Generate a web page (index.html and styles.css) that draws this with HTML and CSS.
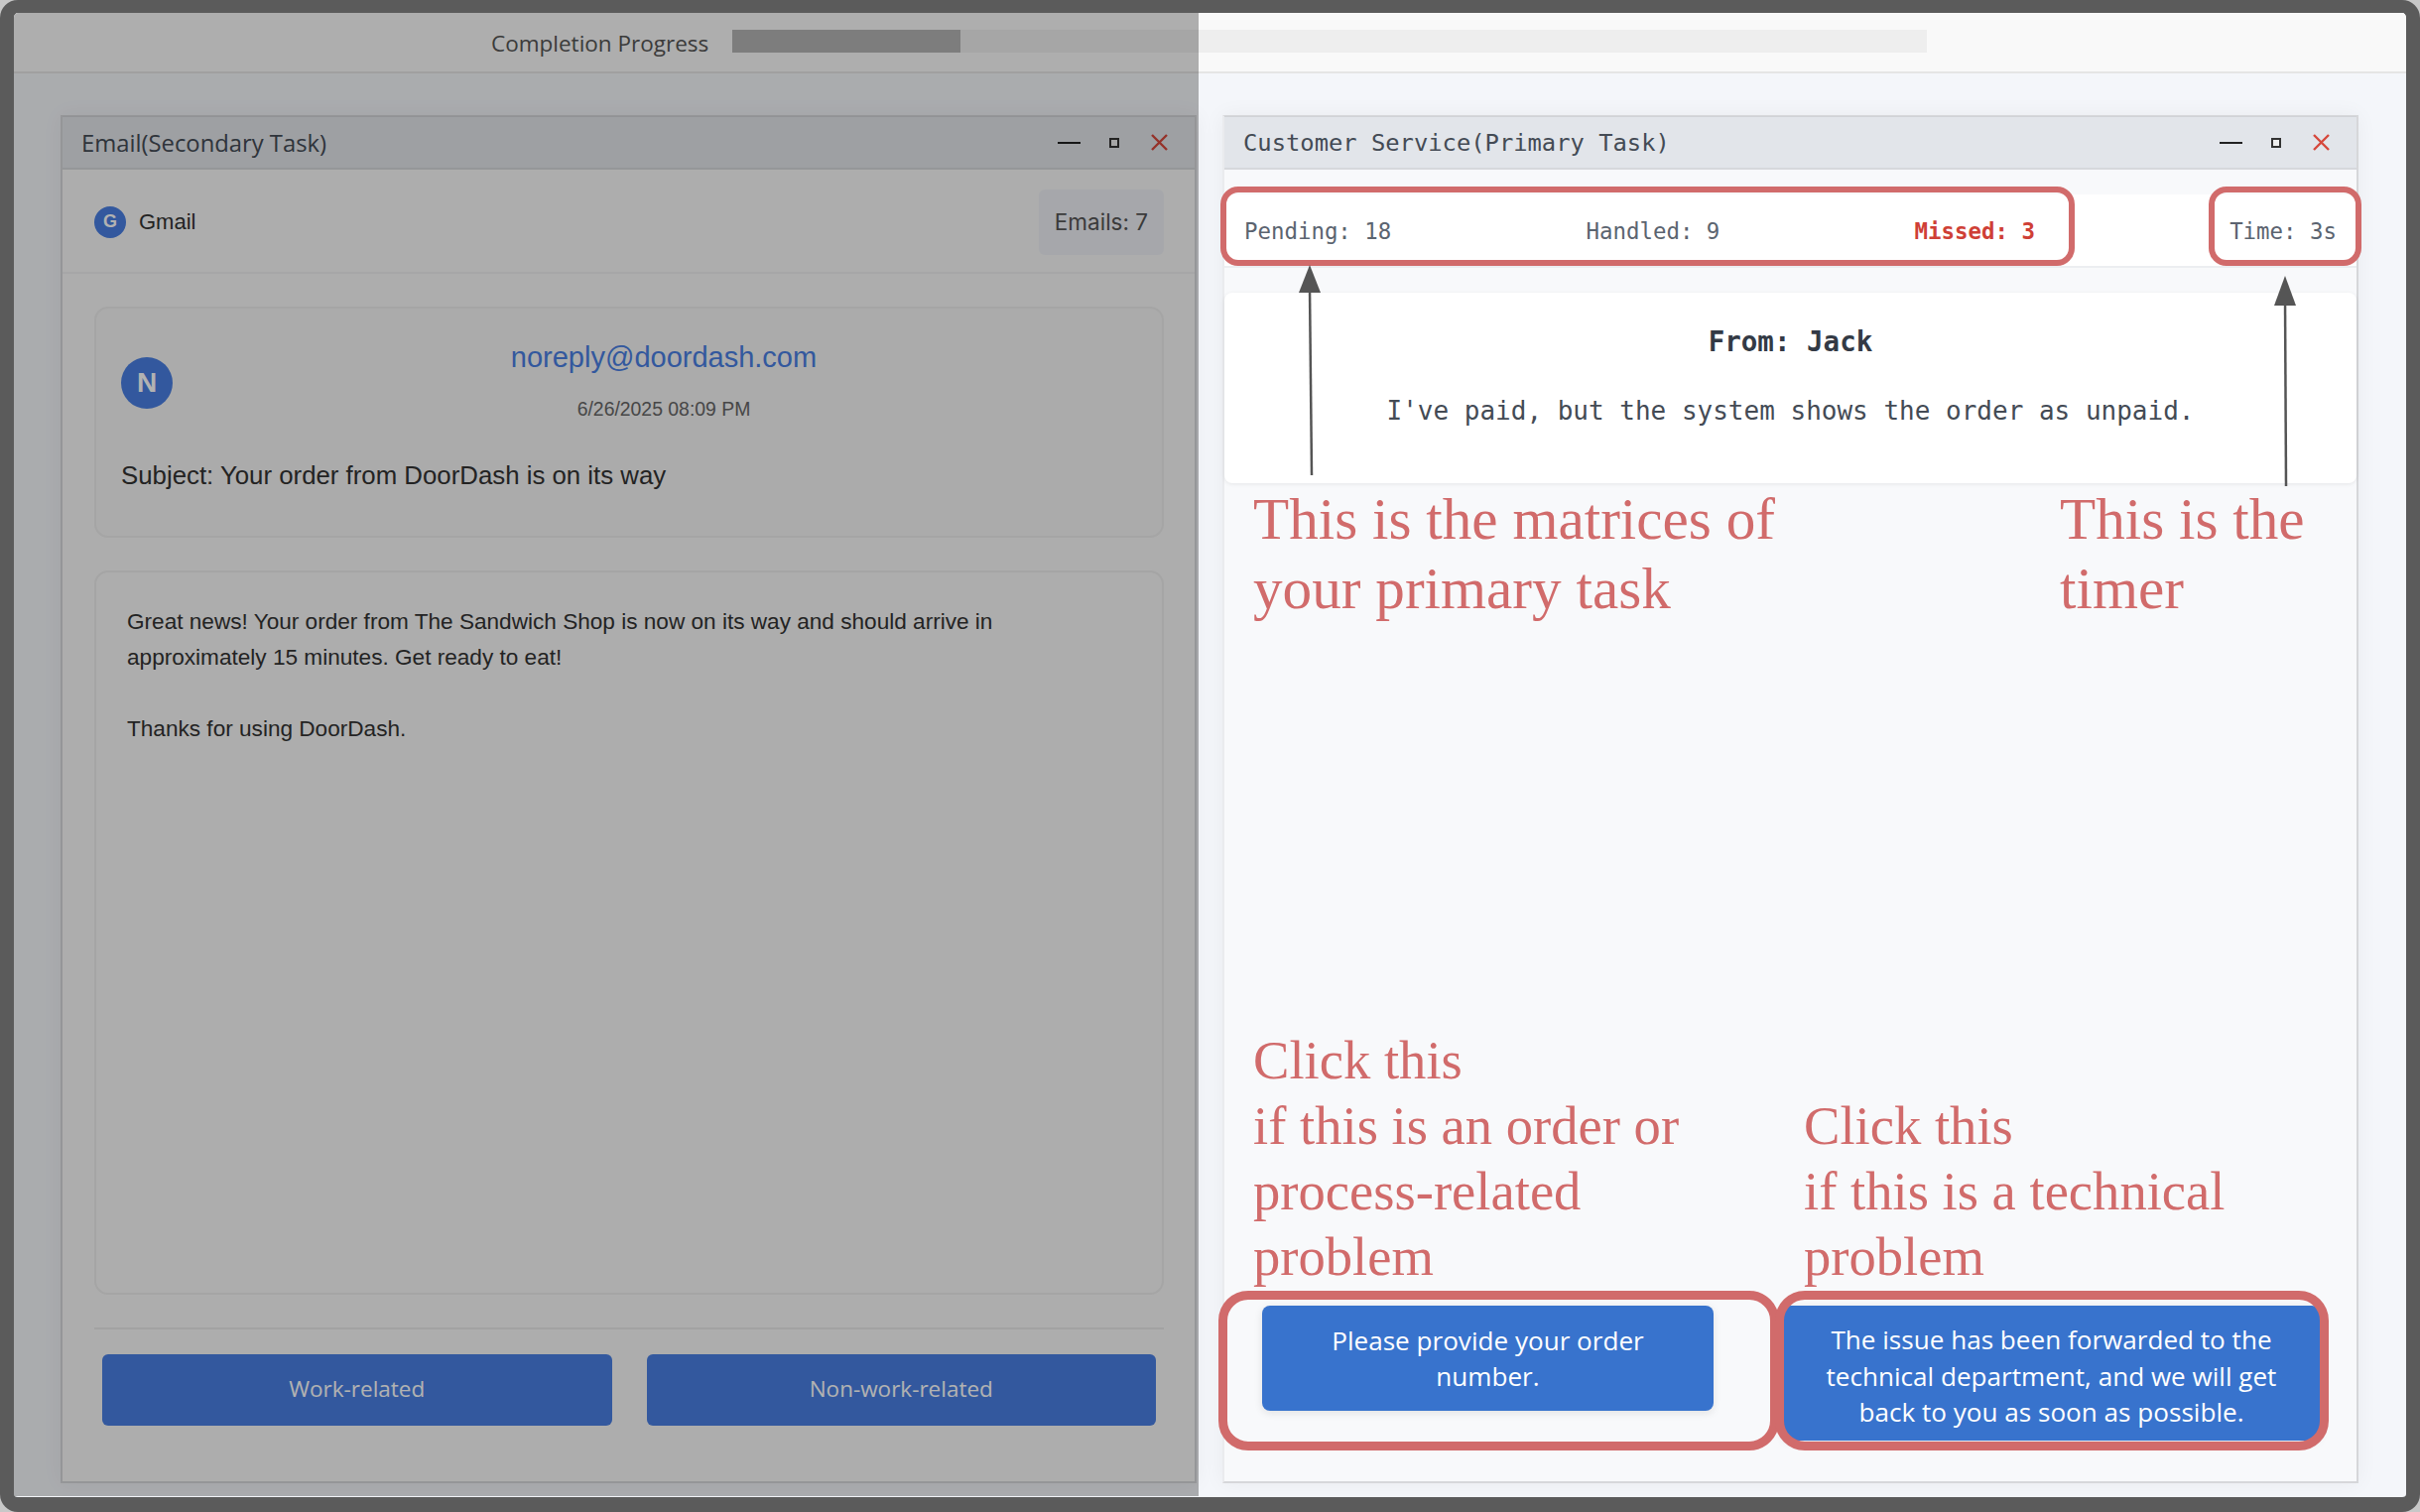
FILE: index.html
```html
<!DOCTYPE html>
<html lang="en">
<head>
    <meta charset="UTF-8">
    <meta name="viewport" content="width=device-width, initial-scale=1.0">
    <title>Task Instructions</title>
    <link rel="stylesheet" href="styles.css">
</head>
<body>

    <div class="frame">
        <!-- Progress -->
        <div class="topbar">
            <span class="progress-label">Completion Progress</span>
            <div class="progress-track"><div class="progress-fill" style="width: 19.1%"></div></div>
        </div>

        <div class="workspace">
            <!-- Email window -->
            <section class="window email-window">
                <div class="titlebar">
                    <span class="title title-email">Email(Secondary Task)</span>
                    <div class="controls">
                        <span class="ctl-min"></span>
                        <span class="ctl-max"></span>
                        <svg class="ctl-close" viewBox="0 0 17 17"><path d="M1 1 16 16M16 1 1 16"/></svg>
                    </div>
                </div>
                <div class="mail-head">
                    <div class="brand"><span class="brand-dot">G</span><span>Gmail</span></div>
                    <div class="mail-count">Emails: 7</div>
                </div>
                <div class="mail-body">
                    <div class="card mail-meta">
                        <div class="sender-row">
                            <span class="avatar">N</span>
                            <div class="sender">
                                <div class="sender-mail">noreply@doordash.com</div>
                                <div class="sender-date">6/26/2025 08:09 PM</div>
                            </div>
                        </div>
                        <div class="subject">Subject: Your order from DoorDash is on its way</div>
                    </div>
                    <div class="card mail-text">
                        Great news! Your order from The Sandwich Shop is now on its way and should arrive in<br>
                        approximately 15 minutes. Get ready to eat!<br><br>
                        Thanks for using DoorDash.
                    </div>
                    <div class="mail-actions">
                        <button class="mail-btn">Work-related</button>
                        <button class="mail-btn">Non-work-related</button>
                    </div>
                </div>
            </section>

            <!-- Customer service window -->
            <section class="window service-window">
                <div class="titlebar">
                    <span class="title title-service">Customer Service(Primary Task)</span>
                    <div class="controls">
                        <span class="ctl-min"></span>
                        <span class="ctl-max"></span>
                        <svg class="ctl-close" viewBox="0 0 17 17"><path d="M1 1 16 16M16 1 1 16"/></svg>
                    </div>
                </div>
                <div class="metrics">
                    <span>Pending: 18</span>
                    <span>Handled: 9</span>
                    <span class="missed">Missed: 3</span>
                    <span>Time: 3s</span>
                </div>
                <div class="message">
                    <div class="message-from">From: Jack</div>
                    <div class="message-text">I've paid, but the system shows the order as unpaid.</div>
                </div>
                <div class="replies">
                    <button class="reply reply-order">Please provide your order number.</button>
                    <button class="reply reply-tech">The issue has been forwarded to the technical department, and we will get back to you as soon as possible.</button>
                </div>
            </section>
        </div>

        <!-- Dim layer over the secondary task -->
        <div class="dim"></div>

        <!-- Annotations -->
        <div class="mark mark-metrics"></div>
        <div class="mark mark-timer"></div>
        <div class="mark mark-big mark-order"></div>
        <div class="mark mark-big mark-tech"></div>

        <svg class="arrows" viewBox="0 0 2439 1524">
            <path class="arrow-line" d="M1322 479 1320 290"/>
            <path class="arrow-head" d="M1320 267 1331 295H1309Z"/>
            <path class="arrow-line" d="M2304 490 2303 300"/>
            <path class="arrow-head" d="M2303 278 2314 308H2292Z"/>
        </svg>

        <div class="note note-metrics">This is the matrices of<br>your primary task</div>
        <div class="note note-timer">This is the<br>timer</div>
        <div class="note note-small note-order">Click this<br>if this is an order or<br>process-related<br>problem</div>
        <div class="note note-small note-tech">Click this<br>if this is a technical<br>problem</div>
    </div>

</body>
</html>
```

FILE: styles.css
```css
* {
    box-sizing: border-box;
}
html, body {
    margin: 0;
    padding: 0;
    height: 100%;
    overflow: hidden;
}
body {
    background-color: #c8c8c8;
}
.frame {
    position: relative;
    height: 1524px;
    display: flex;
    flex-direction: column;
    border: solid #5b5b5b;
    border-width: 13px 14px 15px 14px;
    border-radius: 18px;
    background-color: #f4f6fa;
    overflow: hidden;
}

/* Progress bar */
.topbar {
    height: 61px;
    flex: none;
    display: flex;
    align-items: center;
    background-color: #f9f9f9;
    border-bottom: 2px solid #e5e5e5;
    padding: 0 0 0 481px;
}
.progress-label {
    width: 243px;
    padding-top: 2px;
    font-family: "Open Sans", sans-serif;
    font-size: 22.5px;
    color: #555;
}
.progress-track {
    width: 1204px;
    height: 23px;
    margin-top: -2px;
    background-color: #eeeeee;
}
.progress-fill {
    height: 100%;
    background-color: #b4b4b4;
}

.workspace {
    flex: 1;
    display: flex;
    gap: 26px;
    padding: 42px 48px 14px 47px;
    min-height: 0;
}

/* Windows */
.window {
    flex: 1;
    display: flex;
    flex-direction: column;
    background-color: #f8f9fb;
    border: 2px solid #d6d7da;
    border-top-width: 1px;
    box-shadow: 0 0 20px rgba(0, 0, 0, 0.05);
}
.email-window {
    background-color: #f8f8f8;
}
.service-window {
    border-left-color: #eaebee;
}
.titlebar {
    height: 54px;
    flex: none;
    display: flex;
    align-items: center;
    justify-content: space-between;
    padding: 0 27px 0 19px;
    background-color: #e2e5ea;
    border-top: 1px solid #d0d2d6;
    border-bottom: 2px solid #d6d8dc;
}
.title {
    color: #444b55;
}
.title-email {
    font-family: "Open Sans", sans-serif;
    font-size: 23.8px;
}
.title-service {
    font-family: "DejaVu Sans Mono", monospace;
    font-size: 23.8px;
}
.controls {
    display: flex;
    align-items: center;
}
.ctl-min {
    width: 23px;
    height: 2px;
    background-color: #222;
}
.ctl-max {
    width: 10px;
    height: 10px;
    margin: 0 32px 0 29px;
    border: 2px solid #333;
    background-color: #eee;
}
.ctl-close {
    width: 17px;
    height: 17px;
    fill: none;
    stroke: #d6483c;
    stroke-width: 2.4;
}

/* Email window */
.mail-head {
    height: 105px;
    flex: none;
    display: flex;
    align-items: center;
    justify-content: space-between;
    padding: 2px 31px 0 32px;
    border-bottom: 2px solid #eeeef0;
}
.brand {
    display: flex;
    align-items: center;
    gap: 13px;
    font-family: "Liberation Sans", Arial, sans-serif;
    font-size: 22px;
    color: #333;
}
.brand-dot {
    width: 32px;
    height: 32px;
    border-radius: 50%;
    display: flex;
    align-items: center;
    justify-content: center;
    font-size: 18px;
    font-weight: bold;
    color: #fff;
    background-color: #497fe2;
}
.mail-count {
    height: 66px;
    padding: 0 16px;
    display: flex;
    align-items: center;
    font-family: "Inter", sans-serif;
    font-size: 22.5px;
    color: #555;
    background-color: #eef0f5;
    border-radius: 6px;
}
.mail-body {
    flex: 1;
    min-height: 0;
    display: flex;
    flex-direction: column;
    padding: 33px 31px 56px 32px;
}
.card {
    background-color: #f5f5f5;
    border: 2px solid #ececec;
    border-radius: 14px;
}
.mail-meta {
    height: 233px;
    flex: none;
    padding: 31px 26px 0 25px;
    font-family: "Liberation Sans", Arial, sans-serif;
}
.sender-row {
    display: flex;
    gap: 19px;
}
.avatar {
    width: 52px;
    height: 52px;
    margin-top: 18px;
    flex: none;
    border-radius: 50%;
    display: flex;
    align-items: center;
    justify-content: center;
    font-size: 28px;
    font-weight: bold;
    color: #fff;
    background-color: #497fe2;
}
.sender {
    flex: 1;
    text-align: center;
}
.sender-mail {
    line-height: 36px;
    font-size: 29px;
    color: #497fe2;
}
.sender-date {
    margin-top: 23px;
    line-height: 22px;
    font-size: 19.4px;
    color: #666;
}
.subject {
    margin-top: 39px;
    line-height: 34px;
    font-size: 25.8px;
    color: #333;
}
.mail-text {
    flex: 1;
    margin-top: 33px;
    padding: 32px 30px 32px 31px;
    font-family: "Liberation Sans", Arial, sans-serif;
    font-size: 22.6px;
    line-height: 36px;
    color: #333;
    background-color: #f8f8f8;
}
.mail-actions {
    flex: none;
    display: flex;
    gap: 35px;
    margin-top: 33px;
    padding: 25px 8px 0;
    border-top: 2px solid #e8e8e8;
}
.mail-btn {
    flex: 1;
    height: 72px;
    border: none;
    border-radius: 6px;
    padding: 0 0 3px;
    font-family: "Open Sans", sans-serif;
    font-size: 22.5px;
    color: #fff;
    background-color: #497fe2;
}

/* Customer service window */
.metrics {
    height: 74px;
    margin-top: 25px;
    flex: none;
    display: flex;
    align-items: center;
    justify-content: space-between;
    padding: 2px 20px 0;
    font-family: "DejaVu Sans Mono", monospace;
    font-size: 22.4px;
    color: #5b6470;
    background-color: #fff;
    border-bottom: 2px solid #eceef1;
}
.missed {
    font-weight: bold;
    color: #cf3f36;
}
.message {
    height: 192px;
    margin: 25px 0 0;
    flex: none;
    padding: 32px 20px 0;
    text-align: center;
    font-family: "DejaVu Sans Mono", monospace;
    color: #333a45;
    background-color: #fff;
    border-radius: 8px;
    box-shadow: 0 1px 4px rgba(0, 0, 0, 0.08);
}
.message-from {
    line-height: 34px;
    font-size: 27.5px;
    font-weight: bold;
}
.message-text {
    margin-top: 35px;
    line-height: 36px;
    font-size: 26px;
    color: #444b55;
}
.replies {
    flex: 1;
    display: flex;
    align-items: flex-end;
    gap: 70px;
    padding: 0 0 41px 38px;
}
.reply {
    border: none;
    border-radius: 8px;
    padding: 0 40px;
    font-family: "Open Sans", sans-serif;
    font-size: 26.1px;
    line-height: 36.5px;
    color: #fff;
    background-color: #3873cd;
    box-shadow: 0 2px 8px rgba(0, 0, 0, 0.1);
}
.reply-order {
    width: 455px;
    height: 106px;
    margin-bottom: 30px;
}
.reply-tech {
    width: 541px;
    height: 136px;
    padding: 6px 28px 0;
}

/* Overlay and annotations */
.dim {
    position: absolute;
    left: 0;
    top: 0;
    bottom: 1px;
    width: 1194px;
    background-color: rgba(0, 0, 0, 0.3);
}
.mark {
    position: absolute;
    top: 175px;
    height: 80px;
    border: 6px solid #d16b6b;
    border-radius: 18px;
}
.mark-metrics {
    left: 1216px;
    width: 861px;
}
.mark-timer {
    left: 2212px;
    width: 154px;
}
.mark-big {
    top: 1288px;
    height: 161px;
    border-width: 9px;
    border-radius: 30px;
}
.mark-order {
    left: 1214px;
    width: 565px;
}
.mark-tech {
    left: 1775px;
    width: 558px;
}
.arrows {
    position: absolute;
    left: -14px;
    top: -13px;
    width: 2439px;
    height: 1524px;
    pointer-events: none;
}
.arrow-line {
    fill: none;
    stroke: #555;
    stroke-width: 2.5;
}
.arrow-head {
    fill: #555;
}
.note {
    position: absolute;
    font-family: "Liberation Serif", "Times New Roman", serif;
    font-size: 59.2px;
    line-height: 70px;
    color: #d16b6b;
}
.note-metrics {
    left: 1249px;
    top: 475px;
}
.note-timer {
    left: 2062px;
    top: 475px;
}
.note-small {
    font-size: 54.6px;
    line-height: 66px;
}
.note-order {
    left: 1249px;
    top: 1023px;
}
.note-tech {
    left: 1804px;
    top: 1089px;
}
```
